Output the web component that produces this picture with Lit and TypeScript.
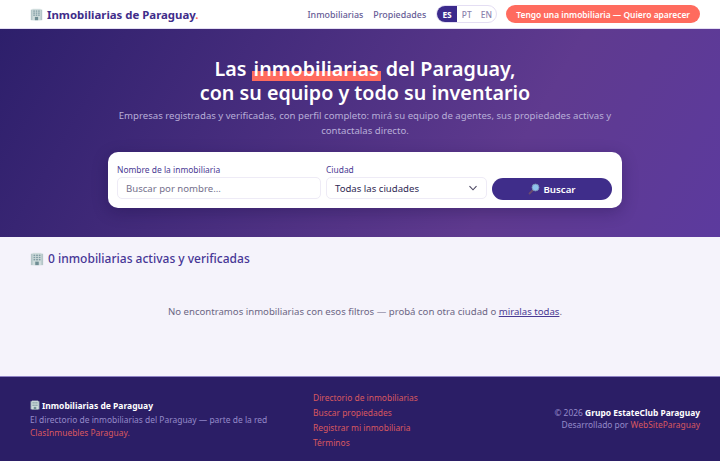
import { LitElement, html, css, svg } from "lit";
import { customElement } from "lit/decorators.js";

const building = (size: number) => html`<svg class="emoji" width=${size} height=${size} viewBox="0 0 16 16" aria-hidden="true">
  <rect x="1" y="2" width="14" height="13" fill="#b4c6c8"/>
  <rect x="3" y="1" width="10" height="14" fill="#cfdcdc"/>
  ${[4, 7, 10].map((x) => [3, 5.5, 8].map((y) => svg`<rect x=${x} y=${y} width="2" height="1.6" fill="#7f9aa2"/>`))}
  <rect x="6" y="11" width="4" height="4" fill="#6f8d94"/>
</svg>`;

const magnifier = html`<svg class="emoji" width="12" height="12" viewBox="0 0 16 16" aria-hidden="true">
  <path d="M6.5 9.5 2 14" stroke="#6b4a6e" stroke-width="2.4" stroke-linecap="round"/>
  <circle cx="10" cy="6" r="4.6" fill="#8fc3ee" stroke="#7a93b5" stroke-width="1.2"/>
</svg>`;

@customElement("app-root")
export class AppRoot extends LitElement {
  static styles = css`
    :host {
      display: block;
      font-family: "Noto Sans", sans-serif;
      color: #2d1f6b;
      background: #f5f3fb;
    }
    a { color: inherit; text-decoration: none; }
    .emoji { flex: none; }
    header {
      height: 28px;
      box-sizing: content-box;
      padding: 0 20px 0 30px;
      background: #fff;
      display: flex;
      align-items: center;
      justify-content: space-between;
      border-bottom: 1px solid #e4def3;
    }
    .brand {
      display: flex;
      align-items: center;
      gap: 4px;
      font-size: 11.4px;
      font-weight: 700;
      color: #3f2d8a;
    }
    .brand i { font-style: normal; color: #ff6b5e; }
    .nav { display: flex; align-items: center; font-size: 8.9px; font-weight: 500; color: #665c96; }
    .nav a { margin-right: 10px; }
    .langs {
      display: flex;
      height: 18px;
      border: 1px solid #e4def3;
      border-radius: 9px;
      overflow: hidden;
      margin-right: 9px;
      font-size: 8.44px;
      font-weight: 500;
      box-sizing: border-box;
    }
    .langs span { width: 19.7px; display: flex; align-items: center; justify-content: center; color: #8a82ad; }
    .langs .on { background: #3b2a8c; color: #fff; font-weight: 700; }
    .nav a.cta {
      margin-right: 0;
      height: 18px;
      padding: 0 10px;
      border-radius: 9px;
      background: #ff6b5e;
      color: #fff;
      display: flex;
      align-items: center;
      font-size: 8.44px;
      font-weight: 600;
    }
    .hero {
      height: 208px;
      background: linear-gradient(120deg, #2d1f6b 0%, #5f3a8f 70%, #5c3a9e 100%);
      display: flex;
      flex-direction: column;
      align-items: center;
      padding: 28px 20px 0 30px;
      box-sizing: border-box;
      color: #fff;
    }
    h1 {
      margin: 0;
      font-size: 19.7px;
      line-height: 23.6px;
      font-weight: 600;
      text-align: center;
    }
    h1 span {
      padding: 0 2px;
      background: linear-gradient(transparent 61%, #ff6b5e 61%, #ff6b5e 97%, transparent 97%);
    }
    .lead {
      margin: 5px 0 0;
      width: 520px;
      text-align: center;
      font-size: 9.6px;
      line-height: 14.4px;
      color: #b8aed8;
    }
    .search {
      margin-top: 14px;
      width: 514px;
      height: 56px;
      box-sizing: border-box;
      background: #fff;
      border-radius: 10px;
      box-shadow: 0 4px 16px rgba(20, 10, 60, 0.3);
      padding: 11px 10px 9px 9px;
      display: grid;
      grid-template-columns: 204px 161px 120px;
      column-gap: 5px;
      align-items: end;
    }
    .field { display: flex; flex-direction: column; gap: 1px; margin-bottom: 1px; }
    label { font-size: 8.44px; line-height: 13px; color: #4a3a94; }
    .box {
      height: 22px;
      box-sizing: border-box;
      border: 1px solid #eeebf6;
      border-radius: 5px;
      padding: 0 8px;
      display: flex;
      align-items: center;
      justify-content: space-between;
      font-size: 9.6px;
      color: #2f2954;
    }
    .box.ph { color: #75708c; }
    .go {
      height: 22px;
      border-radius: 11px;
      background: #3f2d8a;
      color: #fff;
      display: flex;
      align-items: center;
      justify-content: center;
      gap: 3px;
      font-size: 9.7px;
      font-weight: 600;
    }
    .results { height: 139px; padding: 13px 20px 0 30px; box-sizing: border-box; }
    h2 {
      margin: 0;
      display: flex;
      align-items: center;
      gap: 4px;
      font-size: 12px;
      line-height: 17px;
      font-weight: 500;
      color: #463696;
    }
    .empty {
      margin: 37px 0 0;
      text-align: center;
      font-size: 9.6px;
      line-height: 15px;
      color: #6c6684;
    }
    .empty a { color: #4a3a94; text-decoration: underline; }
    footer {
      height: 84px;
      box-sizing: content-box;
      border-top: 1px solid #8f84c4;
      background: #2b1e66;
      padding: 0 20px 0 30px;
      display: grid;
      grid-template-columns: 283px 1fr auto;
      align-items: center;
      font-size: 8.44px;
      color: #958ac9;
    }
    .ftitle {
      display: flex;
      align-items: center;
      gap: 2px;
      color: #fff;
      font-weight: 700;
      font-size: 8.5px;
      line-height: 13px;
      margin-bottom: 2px;
    }
    .about { line-height: 12.6px; }
    .red, .links a { color: #d9585f; }
    .links { display: flex; flex-direction: column; gap: 2px; line-height: 13px; margin-top: 1px; }
    .right { text-align: right; line-height: 12.5px; }
    .right b { color: #fff; font-weight: 700; }
  `;

  render() {
    return html`
      <header>
        <div class="brand">${building(13)}<span>Inmobiliarias de Paraguay<i>.</i></span></div>
        <nav class="nav">
          <a>Inmobiliarias</a>
          <a>Propiedades</a>
          <div class="langs"><span class="on">ES</span><span>PT</span><span>EN</span></div>
          <a class="cta">Tengo una inmobiliaria — Quiero aparecer</a>
        </nav>
      </header>
      <section class="hero">
        <h1>Las <span>inmobiliarias</span> del Paraguay,<br />con su equipo y todo su inventario</h1>
        <p class="lead">Empresas registradas y verificadas, con perfil completo: mirá su equipo de agentes, sus propiedades activas y contactalas directo.</p>
        <div class="search">
          <div class="field"><label>Nombre de la inmobiliaria</label><div class="box ph">Buscar por nombre...</div></div>
          <div class="field"><label>Ciudad</label><div class="box"><span>Todas las ciudades</span>
            <svg width="10" height="10" viewBox="0 0 10 10"><path d="M1.5 3.2 5 6.8l3.5-3.6" fill="none" stroke="#4a4560" stroke-width="1.1"/></svg></div></div>
          <div class="go">${magnifier}<span>Buscar</span></div>
        </div>
      </section>
      <section class="results">
        <h2>${building(14)}<span>0 inmobiliarias activas y verificadas</span></h2>
        <p class="empty">No encontramos inmobiliarias con esos filtros — probá con otra ciudad o <a>miralas todas</a>.</p>
      </section>
      <footer>
        <div>
          <div class="ftitle">${building(10)}<span>Inmobiliarias de Paraguay</span></div>
          <div class="about">El directorio de inmobiliarias del Paraguay — parte de la red<br /><span class="red">ClasInmuebles Paraguay.</span></div>
        </div>
        <div class="links"><a>Directorio de inmobiliarias</a><a>Buscar propiedades</a><a>Registrar mi inmobiliaria</a><a>Términos</a></div>
        <div class="right">© 2026 <b>Grupo EstateClub Paraguay</b><br />Desarrollado por <span class="red">WebSiteParaguay</span></div>
      </footer>
    `;
  }
}
